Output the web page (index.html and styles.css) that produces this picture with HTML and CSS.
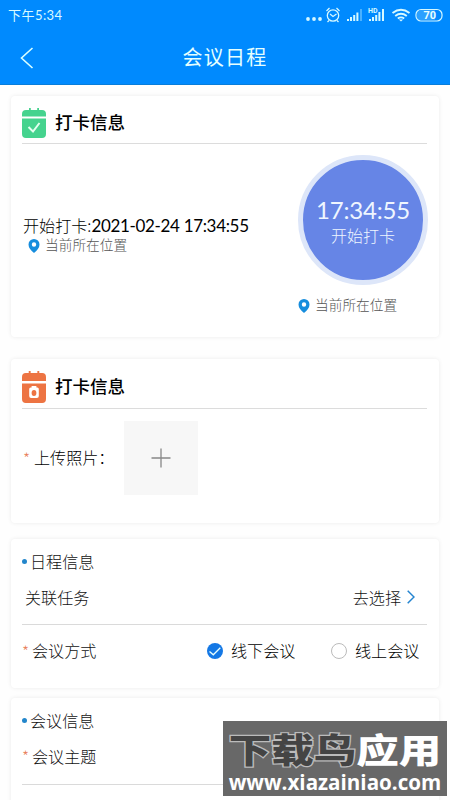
FILE: index.html
```html
<!DOCTYPE html>
<html lang="zh-CN">
<head>
<meta charset="utf-8">
<title>会议日程</title>
<link rel="stylesheet" href="styles.css">
</head>
<body>
<header class="top">
  <div class="status">
    <span class="clock">下午5:34</span>
    <svg class="status-icons" width="140" height="24" viewBox="0 0 140 24" fill="none" stroke="#d5f8ff">
      <g fill="#d5f8ff" stroke="none"><circle cx="5" cy="16" r="1.9"/><circle cx="11" cy="16" r="1.9"/><circle cx="17" cy="16" r="1.9"/></g>
      <g stroke-width="1.3"><circle cx="30" cy="12.500" r="5.7"/><path d="M27 11l3 2.500 3.500-2.500M23.500 8l3-3M36.500 8l-3-3M26 17.500l-1.500 1.500M34 17.500l1.500 1.500"/></g>
      <path stroke-width="2" d="M45 18v-2M48 18v-4M51.200 18v-6M54.400 18v-8.500"/><path stroke-width="2" opacity=".35" d="M58 18V6"/>
      <path stroke-width="2" d="M67 18v-2M70 18v-4M73.200 18v-6M76.400 18v-9M80 18V6"/>
      <text x="65" y="10" class="hd">HD</text>
      <g stroke-width="1.900"><path d="M89.500 10q8.500-6.500 17 0M92.200 12.900q5.800-4.500 11.600 0M94.800 15.500q3.200-2.200 6.400 0"/></g><path d="M95.800 16.500L98 18.500l2.200-2z" fill="#d5f8ff" stroke="none"/>
      <rect x="113" y="6.500" width="26" height="11.500" rx="5" stroke-width="1.200"/><path d="M117 7h15v10.500h-15q-3.500-1-3.500-5t3.500-5.500z" fill="#55b5ff" stroke="none" opacity=".5"/>
      <text x="120.500" y="16" class="battery">70</text>
    </svg>
  </div>
  <div class="nav">
    <svg class="back" width="14" height="22" viewBox="0 0 14 22" fill="none" stroke="#d9ffff" stroke-width="1.600"><path d="M12.500 1L1.500 11l11 10"/></svg>
    <h1>会议日程</h1>
  </div>
</header>
<main>
  <section class="card checkin">
    <div class="heading">
      <svg width="24" height="30" viewBox="0 0 24 30"><path fill="#45d38e" d="M0 8.500V6q0-4 4-4h3V0h1.800v2h6.400V0H17v2h3q4 0 4 4v2.500zM0 10.500h24V26q0 4-4 4H4q-4 0-4-4z"/><path d="M6.500 19l4.500 4.500 6.500-8.500" fill="none" stroke="#e4fff0" stroke-width="2"/></svg>
      <h2>打卡信息</h2>
    </div>
    <div class="checkin-body">
      <div class="record">
        <p class="start">开始打卡:<span class="date">2021-02-24 17:34:55</span></p>
        <p class="place"><svg width="12" height="14" viewBox="0 0 12 14"><path fill="#168ddd" fill-rule="evenodd" d="M6 0a5.500 5.500 0 0 1 5.500 5.500Q11.500 9.500 6 14 .5 9.500.5 5.500A5.500 5.500 0 0 1 6 0zm0 3.300a2.200 2.200 0 1 0 0 4.400 2.200 2.200 0 0 0 0-4.400z"/></svg><span>当前所在位置</span></p>
      </div>
      <div class="punch">
        <div class="circle"><strong>17:34:55</strong><span>开始打卡</span></div>
        <p class="place"><svg width="12" height="14" viewBox="0 0 12 14"><path fill="#168ddd" fill-rule="evenodd" d="M6 0a5.500 5.500 0 0 1 5.500 5.500Q11.500 9.500 6 14 .5 9.500.5 5.500A5.500 5.500 0 0 1 6 0zm0 3.300a2.200 2.200 0 1 0 0 4.400 2.200 2.200 0 0 0 0-4.400z"/></svg><span>当前所在位置</span></p>
      </div>
    </div>
  </section>
  <section class="card photo">
    <div class="heading">
      <svg width="24" height="32" viewBox="0 0 25 32" preserveAspectRatio="none"><path fill="#ed7443" d="M0 10V6q0-4 4-4h3V0h2v2h7V0h2v2h3q4 0 4 4v4zM0 12.500h25V28q0 4-4 4H4q-4 0-4-4z"/><path fill="#fff" fill-rule="evenodd" d="M7.500 18q0-1.500 1.500-1.500h1V15h5v1.500h1q1.500 0 1.500 1.500v7q0 2-2 2H9.500q-2 0-2-2zm5 1a2.500 3 0 1 0 0 6 2.500 3 0 0 0 0-6z"/></svg>
      <h2>打卡信息</h2>
    </div>
    <div class="upload">
      <span class="star">*</span><span class="upload-label">上传照片：</span>
      <div class="add"><svg width="20" height="20" viewBox="0 0 20 20" stroke="#888" stroke-width="1.300"><path d="M.5 10h19M10 .5v19"/></svg></div>
    </div>
  </section>
  <section class="card schedule">
    <h3><i class="dot"></i><span>日程信息</span></h3>
    <div class="task"><span>关联任务</span><span class="choose">去选择<svg width="8" height="14" viewBox="0 0 8 14" fill="none" stroke="#2585d0" stroke-width="1.500"><path d="M.7.700L7 7 .7 13.300"/></svg></span></div>
    <div class="mode">
      <span class="star">*</span><span class="mode-label">会议方式</span>
      <span class="option offline"><svg width="16" height="16" viewBox="0 0 16 16"><circle cx="8" cy="8" r="8" fill="#1478e5"/><path d="M2.500 8.500l3.800 3.300 7-7" fill="none" stroke="#e8ffff" stroke-width="1.300"/></svg><span>线下会议</span></span>
      <span class="option"><svg width="16" height="16" viewBox="0 0 16 16"><circle cx="8" cy="8" r="7.500" fill="none" stroke="#bbb"/></svg><span>线上会议</span></span>
    </div>
  </section>
  <section class="card meeting">
    <h3><i class="dot"></i><span>会议信息</span></h3>
    <div class="topic"><span class="star">*</span><span>会议主题</span></div>
  </section>
</main>
<aside class="watermark">
  <div class="brand"><span class="dark">下载鸟</span><span>应用</span></div>
  <div class="url">www.xiazainiao.com</div>
</aside>
</body>
</html>
```
FILE: styles.css
```css
* { box-sizing: border-box; }
html { overflow: hidden; }
body { margin: 0; width: 450px; height: 800px; overflow: hidden; position: relative; background: #fefefe; color: #111; font: 300 16.100px/24px "Noto Sans CJK SC", sans-serif; }
h1, h2, h3, p { margin: 0; }
svg { display: block; flex: none; }

.top { height: 85px; background: #008afe; color: #d9faff; border-bottom: 1px solid #087dda; }
.status { height: 30px; padding: 3px 7px 0 8px; display: flex; justify-content: space-between; }
.clock { font: 400 13px/25px Lato, "Noto Sans CJK SC", sans-serif; letter-spacing: .45px; }
.status-icons { width: 140px; }
.hd { font: 700 7px Roboto, sans-serif; fill: #d5f8ff; stroke: none; }
.battery { font: 700 11px Roboto, sans-serif; fill: #e8ffff; stroke: none; }
.nav { height: 54px; display: grid; grid-template-columns: 80px 1fr 80px; align-items: center; }
.back { margin-left: 20px; margin-top: 1px; }
.nav h1 { font-size: 20px; font-weight: 400; line-height: 30px; letter-spacing: 1.2px; text-align: center; color: #e5ffff; }

main { padding: 11px 11px 0; }
.card { height: 241px; padding: 0 12px 0 11px; background: #fff; border-radius: 4px; box-shadow: 0 0 4px rgba(0, 0, 0, .08); }
.heading { height: 48px; display: flex; align-items: flex-start; gap: 9px; padding-top: 12px; border-bottom: 1px solid #dcdcdc; }
.heading h2 { color: #000; font-size: 17.5px; font-weight: 500; line-height: 27px; }

.checkin-body { display: flex; justify-content: space-between; }
.record { padding-top: 71px; padding-left: 1px; }
.start { color: #000; font-size: 16.100px; line-height: 20px; white-space: nowrap; }
.date { font-family: Lato, sans-serif; font-weight: 400; font-size: 17px; letter-spacing: -.33px; }
.place { display: flex; align-items: center; gap: 5px; color: #555; font-size: 13.700px; line-height: 17px; }
.place span { margin-top: -2px; }
.record .place { padding-left: 5px; margin-top: 2px; }
.punch { width: 129px; padding-top: 11px; }
.circle { width: 130px; height: 130px; border: 5px solid #dde6f9; border-radius: 50%; background: #6685e6; color: #eff6ff; display: flex; flex-direction: column; align-items: center; padding-top: 35px; }
.circle strong { font: 400 24px/30px Lato, sans-serif; letter-spacing: -.2px; }
.circle span { font-size: 16px; line-height: 20px; }
.punch .place { margin-top: 13px; }

.photo { height: 164px; margin-top: 22px; }
.photo .heading { height: 50px; }
.photo h2 { line-height: 29px; }
.star { width: 11px; color: #e8805a; font-size: 16px; }
.upload { display: flex; align-items: center; height: 98px; padding-left: 1px; color: #000; }
.upload-label { width: 90px; margin-top: -2px; white-space: nowrap; }
.add { width: 74px; height: 74px; background: #f7f7f7; display: grid; place-items: center; }

.schedule { height: 149px; margin-top: 16px; }
.card h3 { height: 44px; display: flex; align-items: center; gap: 3px; font-size: 16.100px; font-weight: 300; line-height: 24px; }
.card h3 span { margin-top: -1px; }
.dot { width: 5px; height: 5px; border-radius: 50%; background: #2386cb; }
.task { height: 42px; display: flex; justify-content: space-between; padding: 2px 12px 0 3px; border-bottom: 1px solid #dadada; }
.choose { display: flex; align-items: center; height: 24px; gap: 6px; }
.mode { display: flex; align-items: center; height: 52px; }
.mode .star, .topic .star { width: 10px; }
.mode-label { width: 175px; margin-top: -2px; }
.option { display: flex; align-items: center; gap: 8px; color: #000; }
.option span { margin-top: -2px; }
.offline { width: 124px; }

.meeting { height: 130px; margin-top: 10px; }
.topic { display: flex; height: 43px; padding-top: 2px; border-bottom: 1px solid #dadada; }

.watermark { position: absolute; left: 223px; top: 721px; width: 224px; height: 75px; padding-top: 7px; background: #686868; color: #fff; text-align: center; white-space: nowrap; }
.brand { height: 43px; font: 900 42.5px/42px "Noto Sans CJK SC", sans-serif; transform: scaleY(.8); }
.brand .dark { color: #444; -webkit-text-stroke: 3px #bbb; paint-order: stroke fill; }
.url { font: 700 20.600px/22px "Open Sans", sans-serif; }
```
